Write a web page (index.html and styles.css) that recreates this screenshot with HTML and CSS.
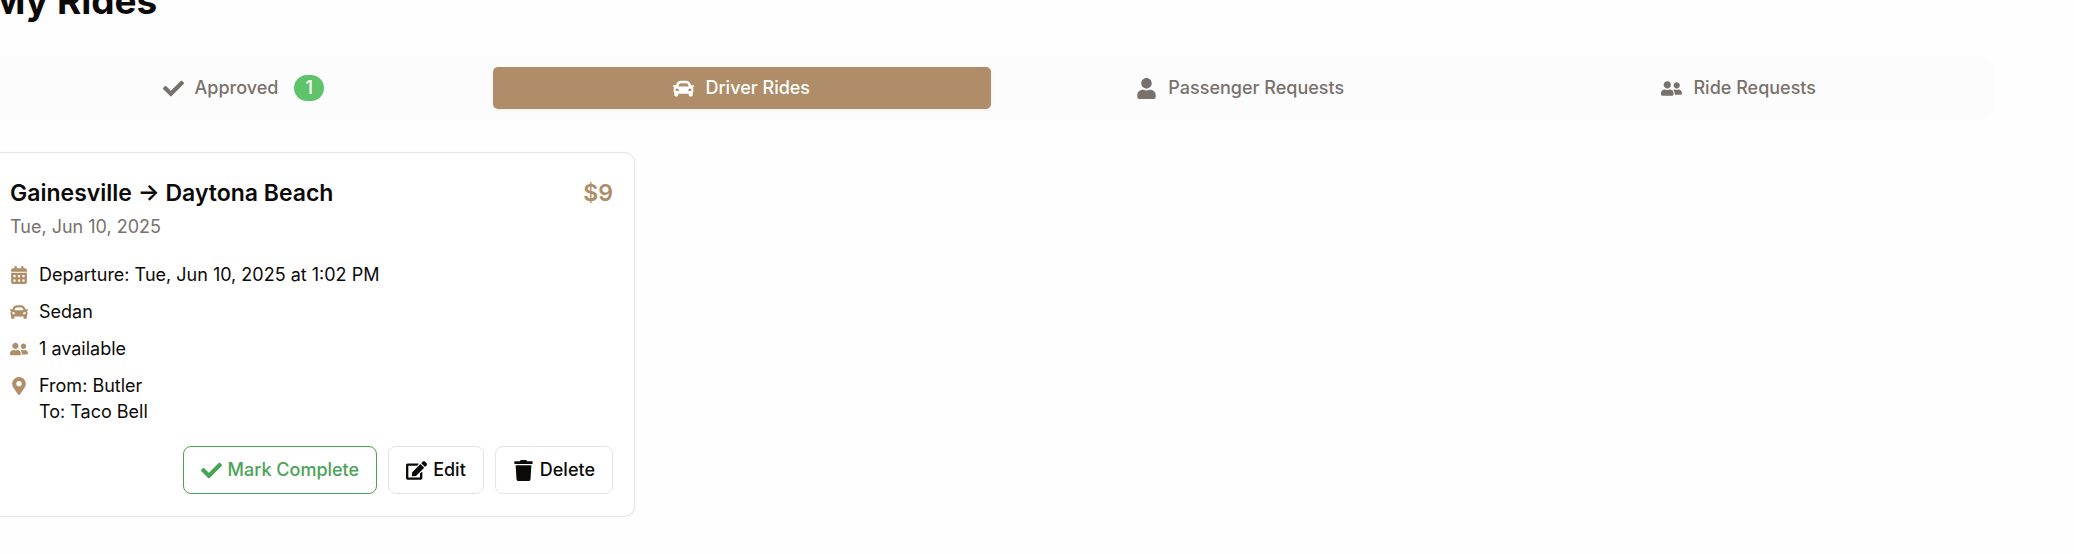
FILE: index.html
```
<!DOCTYPE html>
<html lang="en">
<head>
<meta charset="utf-8">
<title>My Rides</title>
<link rel="stylesheet" href="styles.css">
</head>
<body>
<svg class="sprite" aria-hidden="true">
  <symbol id="check" viewBox="0 0 512 512"><path d="M173.898 439.404l-166.4-166.4c-9.997-9.997-9.997-26.206 0-36.204l36.203-36.204c9.997-9.998 26.207-9.998 36.204 0L192 312.69 432.095 72.596c9.997-9.997 26.207-9.997 36.204 0l36.203 36.204c9.997 9.997 9.997 26.206 0 36.204l-294.4 294.401c-9.998 9.997-26.207 9.997-36.204-.001z"/></symbol>
  <symbol id="car" viewBox="0 0 512 512"><path d="M499.99 176h-59.87l-16.64-41.6C406.38 91.63 365.57 64 319.5 64h-127c-46.06 0-86.88 27.63-103.99 70.4L71.87 176H12.01C4.2 176-1.53 183.34.37 190.91l6 24C7.7 220.25 12.5 224 18.01 224h20.07C24.65 235.73 16 252.78 16 272v48c0 16.12 6.16 30.67 16 41.93V416c0 17.67 14.33 32 32 32h32c17.67 0 32-14.33 32-32v-32h256v32c0 17.67 14.33 32 32 32h32c17.67 0 32-14.33 32-32v-54.07c9.84-11.25 16-25.8 16-41.93v-48c0-19.22-8.65-36.27-22.07-48H494c5.51 0 10.31-3.75 11.64-9.09l6-24c1.89-7.57-3.84-14.91-11.65-14.91zm-352.06-17.83c7.29-18.22 24.94-30.17 44.57-30.17h127c19.63 0 37.28 11.95 44.57 30.17L384 208H128l19.93-49.83zM96 319.8c-19.2 0-32-12.76-32-31.9S76.8 256 96 256s48 28.71 48 47.85-28.8 15.95-48 15.95zm320 0c-19.2 0-48 3.19-48-15.95S396.8 256 416 256s32 12.76 32 31.9-12.8 31.9-32 31.9z"/></symbol>
  <symbol id="user" viewBox="0 0 448 512"><path d="M224 256c70.7 0 128-57.3 128-128S294.7 0 224 0 96 57.3 96 128s57.3 128 128 128zm89.6 32h-16.7c-22.2 10.2-46.9 16-72.9 16s-50.6-5.8-72.9-16h-16.7C60.2 288 0 348.2 0 422.4V464c0 26.5 21.5 48 48 48h352c26.5 0 48-21.5 48-48v-41.6c0-74.2-60.2-134.4-134.4-134.4z"/></symbol>
  <symbol id="users" viewBox="0 0 640 512"><path d="M192 256c61.9 0 112-50.1 112-112S253.9 32 192 32 80 82.1 80 144s50.1 112 112 112zm76.8 32h-8.3c-20.8 10-43.9 16-68.5 16s-47.6-6-68.5-16h-8.3C51.6 288 0 339.6 0 403.2V432c0 26.5 21.5 48 48 48h288c26.5 0 48-21.5 48-48v-28.8c0-63.6-51.6-115.2-115.2-115.2zM480 256c53 0 96-43 96-96s-43-96-96-96-96 43-96 96 43 96 96 96zm48 32h-3.8c-13.9 4.8-28.6 8-44.2 8s-30.3-3.2-44.2-8H432c-20.4 0-39.2 5.9-55.7 15.4 24.4 26.3 39.7 61.2 39.7 99.8v38.4c0 2.2-.5 4.3-.6 6.4H592c26.5 0 48-21.5 48-48 0-61.9-50.1-112-112-112z"/></symbol>
  <symbol id="calendar" viewBox="0 0 448 512"><path d="M0 464c0 26.500 21.500 48 48 48h352c26.500 0 48-21.500 48-48V192H0v272zm320-196c0-6.600 5.400-12 12-12h40c6.600 0 12 5.400 12 12v40c0 6.600-5.400 12-12 12h-40c-6.600 0-12-5.400-12-12v-40zm0 128c0-6.600 5.400-12 12-12h40c6.600 0 12 5.400 12 12v40c0 6.600-5.400 12-12 12h-40c-6.600 0-12-5.400-12-12v-40zM192 268c0-6.600 5.400-12 12-12h40c6.600 0 12 5.400 12 12v40c0 6.600-5.400 12-12 12h-40c-6.600 0-12-5.400-12-12v-40zm0 128c0-6.600 5.400-12 12-12h40c6.600 0 12 5.400 12 12v40c0 6.600-5.400 12-12 12h-40c-6.600 0-12-5.400-12-12v-40zM64 268c0-6.600 5.400-12 12-12h40c6.600 0 12 5.400 12 12v40c0 6.600-5.400 12-12 12H76c-6.600 0-12-5.400-12-12v-40zm0 128c0-6.600 5.400-12 12-12h40c6.600 0 12 5.400 12 12v40c0 6.600-5.400 12-12 12H76c-6.600 0-12-5.400-12-12v-40zM400 64h-48V16c0-8.800-7.200-16-16-16h-32c-8.800 0-16 7.200-16 16v48H160V16c0-8.800-7.200-16-16-16h-32c-8.800 0-16 7.200-16 16v48H48C21.500 64 0 85.500 0 112v48h448v-48c0-26.500-21.500-48-48-48z"/></symbol>
  <symbol id="pin" viewBox="0 0 384 512"><path d="M172.268 501.67C26.97 291.031 0 269.413 0 192 0 85.961 85.961 0 192 0s192 85.961 192 192c0 77.413-26.970 99.031-172.268 309.67-9.535 13.774-29.930 13.773-39.464 0zM192 272c44.183 0 80-35.817 80-80s-35.817-80-80-80-80 35.817-80 80 35.817 80 80 80z"/></symbol>
  <symbol id="edit" viewBox="0 0 576 512"><path d="M402.600 83.200l90.200 90.200c3.800 3.800 3.800 10 0 13.800L274.400 405.600l-92.800 10.300c-12.400 1.400-22.900-9.100-21.500-21.500l10.300-92.800L388.800 83.200c3.800-3.800 10-3.800 13.800 0zm162-22.900l-48.800-48.800c-15.200-15.200-39.900-15.200-55.200 0l-35.400 35.400c-3.800 3.800-3.800 10 0 13.800l90.200 90.200c3.800 3.800 10 3.800 13.800 0l35.400-35.400c15.200-15.300 15.200-40 0-55.200zM384 346.200V448H64V128h229.800c3.200 0 6.200-1.300 8.500-3.500l40-40c7.600-7.600 2.200-20.500-8.500-20.500H48C21.500 64 0 85.500 0 112v352c0 26.500 21.500 48 48 48h352c26.500 0 48-21.500 48-48V306.200c0-10.700-12.900-16-20.500-8.500l-40 40c-2.200 2.300-3.500 5.300-3.500 8.500z"/></symbol>
  <symbol id="trash" viewBox="0 0 448 512"><path d="M432 32H312l-9.400-18.700A24 24 0 0 0 281.100 0H166.800a23.720 23.720 0 0 0-21.400 13.300L136 32H16A16 16 0 0 0 0 48v32a16 16 0 0 0 16 16h416a16 16 0 0 0 16-16V48a16 16 0 0 0-16-16zM53.200 467a48 48 0 0 0 47.900 45h245.800a48 48 0 0 0 47.900-45L416 128H32z"/></symbol>
</svg>
<main class="page">
  <h1 class="title">My Rides</h1>
  <nav class="tabs">
    <button class="tab"><svg class="icon"><use href="#check"/></svg>Approved <span class="badge">1</span></button>
    <button class="tab tab-active"><svg class="icon"><use href="#car"/></svg>Driver Rides</button>
    <button class="tab"><svg class="icon"><use href="#user"/></svg>Passenger Requests</button>
    <button class="tab"><svg class="icon"><use href="#users"/></svg>Ride Requests</button>
  </nav>
  <article class="card">
    <header class="card-head">
      <h2 class="route">Gainesville → Daytona Beach</h2>
      <span class="price">$9</span>
    </header>
    <p class="date">Tue, Jun 10, 2025</p>
    <ul class="details">
      <li class="detail"><svg class="icon-small"><use href="#calendar"/></svg>Departure: Tue, Jun 10, 2025 at 1:02 PM</li>
      <li class="detail"><svg class="icon-small"><use href="#car"/></svg>Sedan</li>
      <li class="detail"><svg class="icon-small"><use href="#users"/></svg>1 available</li>
      <li class="detail"><svg class="icon-small"><use href="#pin"/></svg><span>From: Butler<br>To: Taco Bell</span></li>
    </ul>
    <footer class="actions">
      <button class="action action-complete"><svg class="icon"><use href="#check"/></svg>Mark Complete</button>
      <button class="action"><svg class="icon"><use href="#edit"/></svg>Edit</button>
      <button class="action"><svg class="icon"><use href="#trash"/></svg>Delete</button>
    </footer>
  </article>
</main>
</body>
</html>
```
FILE: styles.css
```
* { box-sizing: border-box; margin: 0; padding: 0; }
body {
  overflow: hidden;
  background: #fefefe;
  color: #0c0a09;
  font: 18px/26px Inter, "Liberation Sans", sans-serif;
}
button { font: inherit; cursor: pointer; }
.sprite { display: none; }
.page { margin: -22px 80px 0 -12px; }
.title { padding-left: 3px; font-size: 37px; line-height: 46px; font-weight: 700; }
.tabs {
  display: grid;
  grid-template-columns: repeat(4, 1fr);
  margin-top: 32px;
  padding: 11px 6px;
  border-radius: 11px;
  background: #fcfcfc;
}
.tab {
  display: flex;
  align-items: center;
  justify-content: center;
  gap: 11px;
  height: 42px;
  border: 0;
  border-radius: 5px;
  background: transparent;
  color: #78716c;
  font-weight: 500;
}
.tab-active { background: #ae8d68; color: #fff; box-shadow: 0 1px 3px rgb(0 0 0 / 8%); }
.badge {
  margin-left: 5px;
  padding: 0 11px;
  border-radius: 13px;
  background: #5fc36a;
  color: #fff;
  font-size: 18px;
}
.icon { width: 21px; height: 21px; fill: currentColor; }
.icon-small { flex: none; width: 18px; height: 18px; margin-top: 4px; fill: #ae8d68; }
.card {
  width: 647px;
  margin-top: 32px;
  padding: 24px 21px 22px;
  border: 1px solid #e4e4e4;
  border-radius: 11px;
  background: #fff;
  box-shadow: 0 1px 3px rgb(0 0 0 / 6%);
}
.card-head { display: flex; justify-content: space-between; align-items: center; }
.route, .price { font-size: 23px; line-height: 32px; font-weight: 600; }
.price { color: #ae8d68; }
.date { margin-top: 5px; color: #78716c; }
.details { display: grid; gap: 11px; margin-top: 22px; list-style: none; }
.detail { display: flex; gap: 11px; }
.actions { display: flex; justify-content: flex-end; gap: 11px; margin-top: 21px; }
.action {
  display: flex;
  align-items: center;
  gap: 6px;
  height: 48px;
  padding: 0 17px;
  border: 1px solid #e4e4e4;
  border-radius: 8px;
  background: #fff;
  color: #0c0a09;
  font-weight: 500;
}
.action-complete { border-color: #4ba355; color: #4ba355; }
```
